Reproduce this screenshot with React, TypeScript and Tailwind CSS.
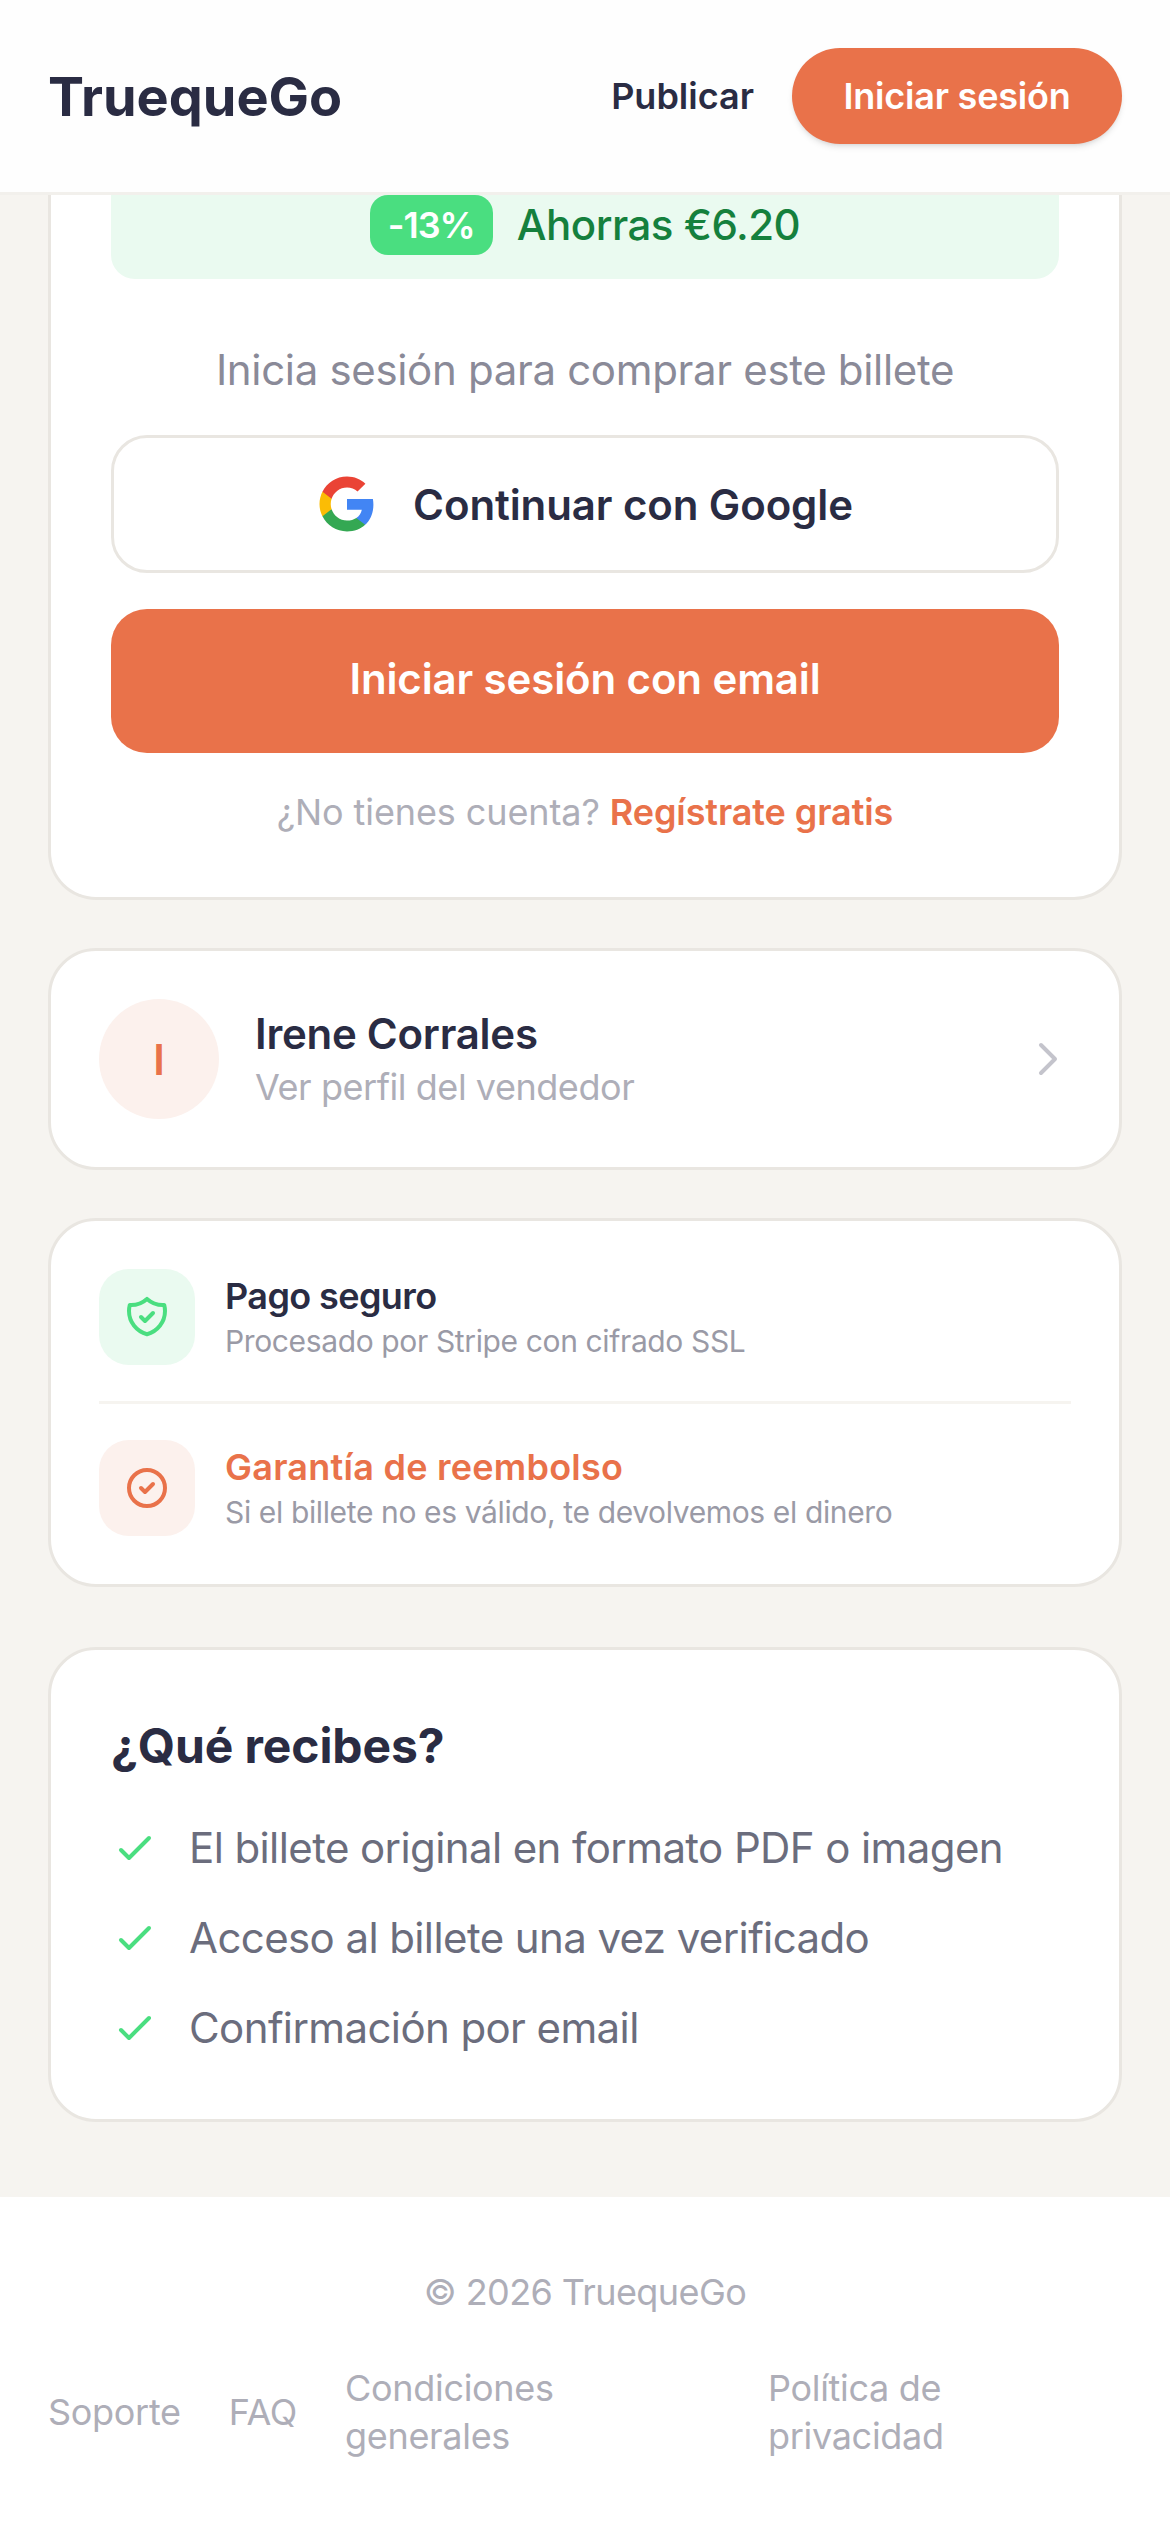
import { ReactNode } from "react";

const font = { fontFamily: '"Inter", "Noto Sans", sans-serif' };

function Outline({ d, className }: { d: string; className: string }) {
  return (
    <svg viewBox="0 0 24 24" fill="none" stroke="currentColor" strokeWidth={2} strokeLinecap="round" strokeLinejoin="round" className={className}>
      <path d={d} />
    </svg>
  );
}

const shieldCheck =
  "M9 12l2 2 4-4m5.618-4.016A11.955 11.955 0 0112 2.944a11.955 11.955 0 01-8.618 3.04A12.02 12.02 0 003 9c0 5.591 3.824 10.29 9 11.622 5.176-1.332 9-6.03 9-11.622 0-1.042-.133-2.052-.382-3.016z";
const checkCircle = "M9 12l2 2 4-4m6 2a9 9 0 11-18 0 9 9 0 0118 0z";
const check = "M5 13l4 4L19 7";
const chevron = "M9 5l7 7-7 7";

function GoogleLogo() {
  return (
    <svg viewBox="0 0 24 24" className="h-[60px] w-[60px] shrink-0">
      <path fill="#4285F4" d="M22.56 12.25c0-.78-.07-1.53-.2-2.25H12v4.26h5.92c-.26 1.37-1.04 2.53-2.21 3.31v2.77h3.57c2.08-1.92 3.28-4.74 3.28-8.09z" />
      <path fill="#34A853" d="M12 23c2.97 0 5.46-.98 7.28-2.66l-3.57-2.77c-.98.66-2.23 1.06-3.71 1.06-2.86 0-5.29-1.93-6.16-4.53H2.18v2.84C3.99 20.53 7.7 23 12 23z" />
      <path fill="#FBBC05" d="M5.84 14.09c-.22-.66-.35-1.36-.35-2.09s.13-1.43.35-2.09V7.07H2.18C1.43 8.55 1 10.22 1 12s.43 3.45 1.18 4.93l2.85-2.22.81-.62z" />
      <path fill="#EA4335" d="M12 5.38c1.62 0 3.06.56 4.21 1.64l3.15-3.15C17.45 2.09 14.97 1 12 1 7.7 1 3.99 3.47 2.18 7.07l3.66 2.84c.87-2.6 3.3-4.53 6.16-4.53z" />
    </svg>
  );
}

function Card({ className, children }: { className: string; children: ReactNode }) {
  return <section className={`border-[3px] border-[#e9e6e1] bg-white rounded-[48px] ${className}`}>{children}</section>;
}

function Feature({ icon, iconBg, title, titleClass, text }: { icon: ReactNode; iconBg: string; title: string; titleClass: string; text: string }) {
  return (
    <div className="flex items-center gap-[30px]">
      <div className={`flex h-[96px] w-[96px] shrink-0 items-center justify-center rounded-[30px] ${iconBg}`}>{icon}</div>
      <div>
        <p className={`text-[36px] font-semibold leading-[48px] ${titleClass}`}>{title}</p>
        <p className="text-[30px] leading-[42px] tracking-[-0.37px] text-[#9a9aa6]">{text}</p>
      </div>
    </div>
  );
}

const perks = ["El billete original en formato PDF o imagen", "Acceso al billete una vez verificado", "Confirmación por email"];

export default function App() {
  return (
    <div style={font} className="flex h-[2532px] flex-col overflow-hidden bg-[#f6f4f0] text-[#2a2c43]">
      <header className="flex h-[195px] shrink-0 items-center justify-between border-b-[3px] border-[#f2f0ec] bg-[#fefefe] px-[48px]">
        <span className="text-[54px] font-bold tracking-[0px]">TruequeGo</span>
        <div className="flex items-center gap-[38px]">
          <span className="text-[36px] font-semibold tracking-[0px]">Publicar</span>
          <button className="flex h-[96px] w-[330px] items-center justify-center rounded-full bg-[#e9724a] text-[36px] font-semibold tracking-[-0.2px] text-white shadow-md">
            Iniciar sesión
          </button>
        </div>
      </header>

      <main className="shrink-0 px-[48px] pb-[75px]">
        <Card className="rounded-t-none border-t-0 px-[60px] pb-[55px]">
          <div className="flex h-[84px] items-start justify-center gap-[24px] rounded-b-[24px] bg-[#eafaf0]">
            <span className="flex h-[60px] w-[123px] items-center justify-center rounded-[18px] bg-[#4ade80] text-[36px] font-semibold tracking-[-1px] text-white">-13%</span>
            <span className="text-[42px] font-medium leading-[60px] tracking-[-0.5px] text-[#15803d]">Ahorras €6.20</span>
          </div>
          <p className="mt-[60px] text-center text-[42px] leading-[61px] tracking-[-0.33px] text-[#8a8a98]">Inicia sesión para comprar este billete</p>
          <button className="mt-[35px] flex h-[138px] w-full items-center justify-center gap-[36px] rounded-[36px] border-[3px] border-[#e9e6e1] bg-white text-[42px] font-semibold tracking-[-0.1px]">
            <GoogleLogo />
            Continuar con Google
          </button>
          <button className="mt-[36px] flex h-[144px] w-full items-center justify-center rounded-[36px] bg-[#e9724a] pb-[5px] text-[42px] font-semibold tracking-[-0.12px] text-white">
            Iniciar sesión con email
          </button>
          <p className="mt-[29px] text-center text-[36px] leading-[60px] tracking-[-0.1px] text-[#aeaeb8]">
            ¿No tienes cuenta? <span className="font-semibold text-[#e9724a]">Regístrate gratis</span>
          </p>
        </Card>

        <Card className="mt-[48px] flex items-center justify-between p-[48px]">
          <div className="flex items-center gap-[36px]">
            <div className="flex h-[120px] w-[120px] items-center justify-center rounded-full bg-[#fcf1ed] text-[42px] font-semibold text-[#e9724a]">I</div>
            <div className="pt-[2px]">
              <p className="text-[42px] font-semibold leading-[54px] tracking-[-0.25px]">Irene Corrales</p>
              <p className="text-[36px] leading-[53px] tracking-[-0.45px] text-[#aeaeb8]">Ver perfil del vendedor</p>
            </div>
          </div>
          <Outline d={chevron} className="h-[48px] w-[48px] text-[#c4c4cc]" />
        </Card>

        <Card className="mt-[48px] p-[48px]">
          <div className="border-b-[3px] border-[#f6f4f0] pb-[36px]">
            <Feature
              icon={<Outline d={shieldCheck} className="h-[48px] w-[48px] text-[#4ade80]" />}
              iconBg="bg-[#eafaf0]"
              title="Pago seguro"
              titleClass="tracking-[-0.6px] text-[#2a2c43]"
              text="Procesado por Stripe con cifrado SSL"
            />
          </div>
          <div className="pt-[36px]">
            <Feature
              icon={<Outline d={checkCircle} className="h-[48px] w-[48px] text-[#e9724a]" />}
              iconBg="bg-[#fcf1ed]"
              title="Garantía de reembolso"
              titleClass="tracking-[0.25px] text-[#e9724a]"
              text="Si el billete no es válido, te devolvemos el dinero"
            />
          </div>
        </Card>

        <Card className="mt-[60px] p-[60px]">
          <h2 className="text-[48px] font-bold leading-[72px] tracking-[-0.1px]">¿Qué recibes?</h2>
          <ul className="mt-[34px] flex flex-col gap-[27px]">
            {perks.map((perk) => (
              <li key={perk} className="flex items-center gap-[30px] text-[42px] leading-[63px] tracking-[-0.6px] text-[#6b6d7d]">
                <Outline d={check} className="h-[48px] w-[48px] shrink-0 text-[#4ade80]" />
                {perk}
              </li>
            ))}
          </ul>
        </Card>
      </main>

      <footer className="flex-1 bg-white px-[48px] pt-[71px] text-[36px] leading-[48px] tracking-[-0.3px] text-[#aeaeb8]">
        <p className="text-center tracking-[-0.6px]">© 2026 TruequeGo</p>
        <nav className="mt-[48px] flex items-center gap-[48px]">
          <a>Soporte</a>
          <a>FAQ</a>
          <a className="w-[375px]">Condiciones generales</a>
          <a className="w-[300px]">Política de privacidad</a>
        </nav>
      </footer>
    </div>
  );
}
